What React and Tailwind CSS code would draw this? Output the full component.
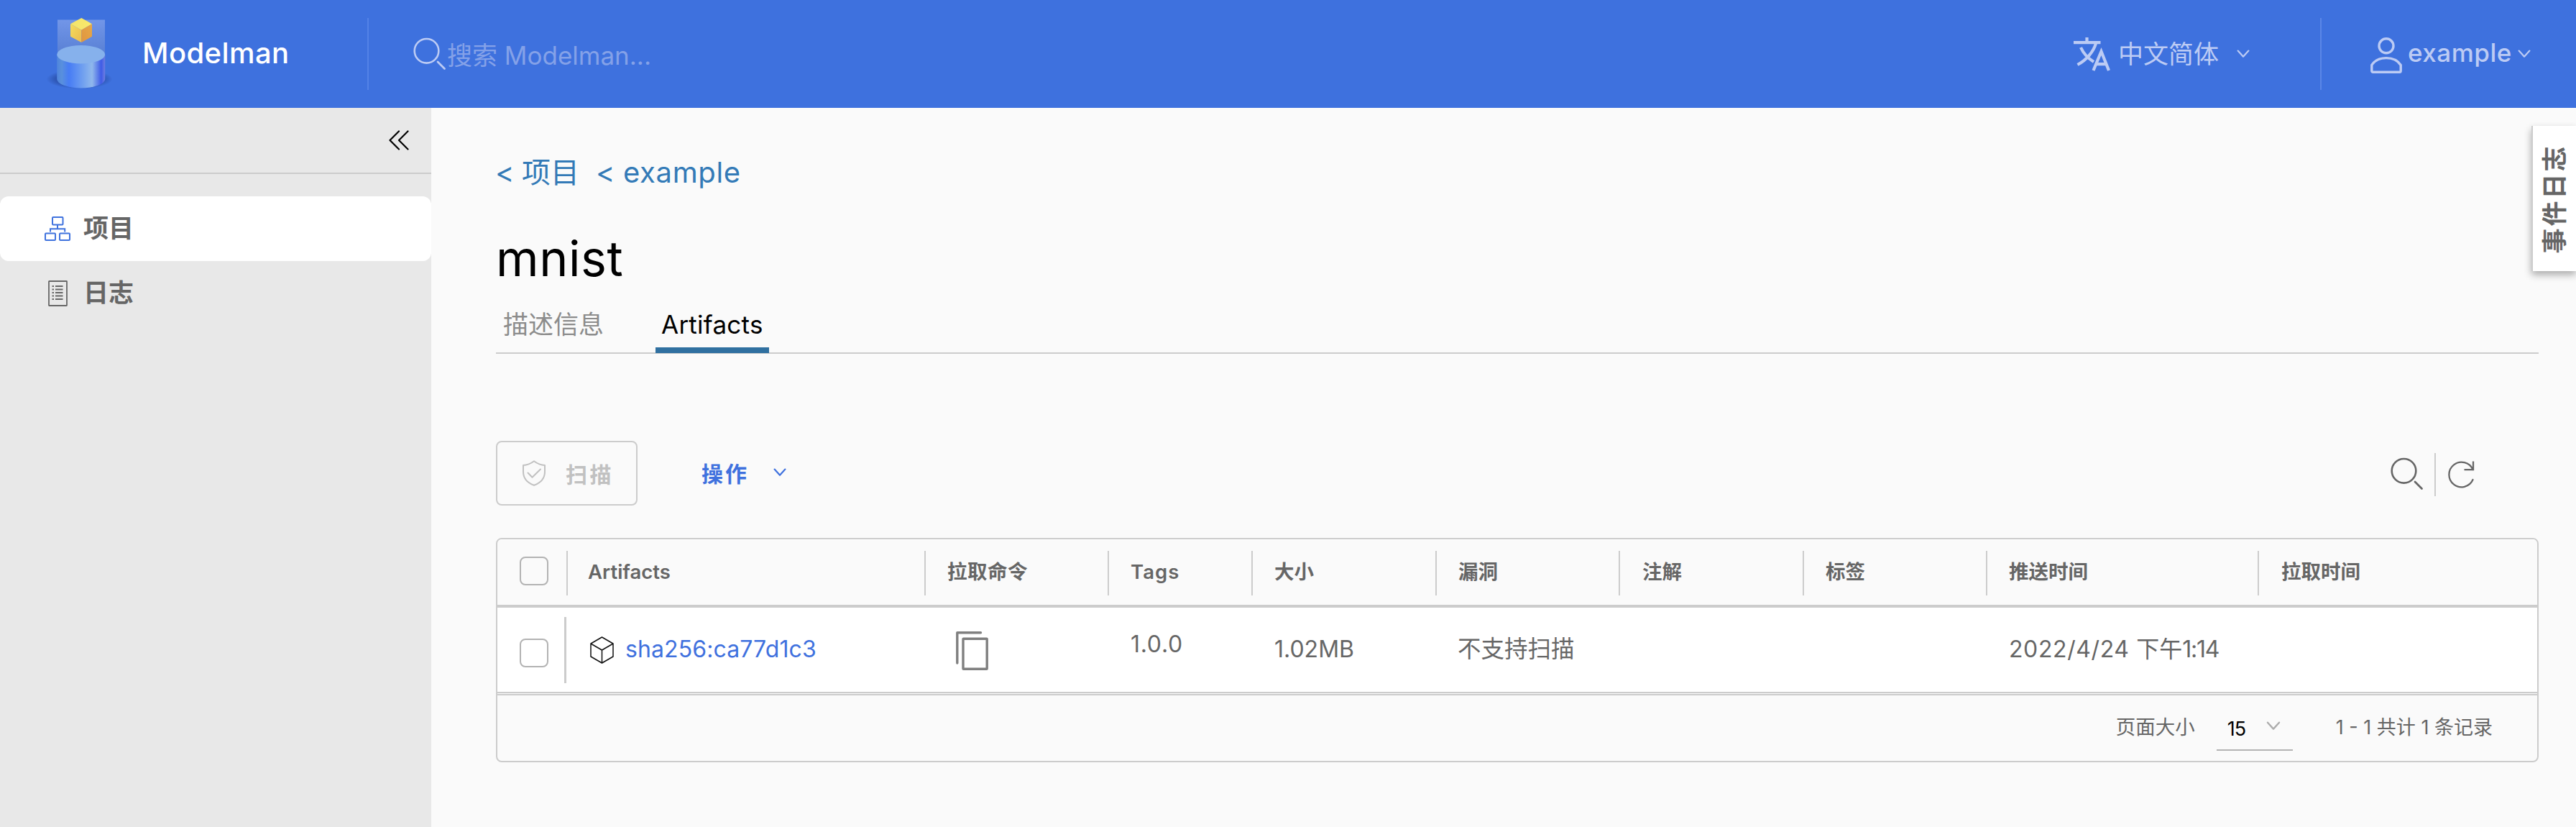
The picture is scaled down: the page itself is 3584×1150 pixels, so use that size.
const T = ({ className = "", children }) => (
  <span className={`block shrink-0 whitespace-pre leading-none ${className}`}>{children}</span>
);

const Chevron = ({ className = "" }) => (
  <svg viewBox="0 0 18 12" className={`block shrink-0 ${className}`} fill="none" stroke="currentColor" strokeWidth="2.2" strokeLinecap="round" strokeLinejoin="round">
    <path d="M1.6 1.6 9 9.8 16.4 1.6" />
  </svg>
);

const SearchIcon = ({ className = "" }) => (
  <svg viewBox="0 0 46 46" className={`block h-[46px] w-[46px] shrink-0 ${className}`} fill="none" stroke="currentColor" strokeWidth="2.6" strokeLinecap="round">
    <circle cx="18.5" cy="18.8" r="16.8" />
    <path d="M34 34 43.5 43.5" strokeWidth="2.8" />
  </svg>
);

function Logo() {
  return (
    <svg viewBox="60 10 100 120" className="ml-[60px] mt-[10px] h-[120px] w-[100px] shrink-0">
      <defs>
        <linearGradient id="beam" x1="0" y1="0" x2="0" y2="1">
          <stop offset="0" stopColor="#7296e8" />
          <stop offset="1" stopColor="#587fd4" />
        </linearGradient>
        <linearGradient id="body" x1="0" y1="0" x2="1" y2="0">
          <stop offset="0" stopColor="#4f84dc" />
          <stop offset="0.1" stopColor="#5990dd" />
          <stop offset="0.25" stopColor="#477cf5" />
          <stop offset="0.5" stopColor="#6a9bf0" />
          <stop offset="0.73" stopColor="#90b8ec" />
          <stop offset="0.92" stopColor="#3e5be6" />
          <stop offset="1" stopColor="#6f7ee0" />
        </linearGradient>
        <linearGradient id="cubeTop" x1="0" y1="0" x2="1" y2="0">
          <stop offset="0" stopColor="#f3e36c" />
          <stop offset="1" stopColor="#f9ea6a" />
        </linearGradient>
        <linearGradient id="cubeLeft" x1="0" y1="0" x2="1" y2="1">
          <stop offset="0" stopColor="#f4dc5c" />
          <stop offset="1" stopColor="#eabb50" />
        </linearGradient>
        <linearGradient id="cubeRight" x1="0" y1="1" x2="1" y2="0">
          <stop offset="0" stopColor="#e0943f" />
          <stop offset="1" stopColor="#e6a948" />
        </linearGradient>
        <radialGradient id="shade">
          <stop offset="0.6" stopColor="#1e3c8c" stopOpacity="0.7" />
          <stop offset="1" stopColor="#1e3c8c" stopOpacity="0" />
        </radialGradient>
      </defs>
      <ellipse cx="110.5" cy="110" rx="46" ry="13.5" fill="url(#shade)" />
      <path d="M80 27.5H146V76H80Z" fill="url(#beam)" />
      <path d="M79.2 76V110A33.5 12.5 0 0 0 146.200 110V76Z" fill="url(#body)" />
      <ellipse cx="112.7" cy="75.8" rx="33.5" ry="12.7" fill="#86b1ec" />
      <path d="M113.3 25 128 33.2 113.3 41.7 98 33.2Z" fill="url(#cubeTop)" />
      <path d="M98 33.2 113.3 41.7V59L98 50.8Z" fill="url(#cubeLeft)" />
      <path d="M128 33.2 113.3 41.7V59L128 50.8Z" fill="url(#cubeRight)" />
    </svg>
  );
}

function Header() {
  return (
    <header className="flex h-[150px] items-start bg-[#3e71de]">
      <Logo />
      <T className="ml-[38px] mt-[54px] w-[313px] text-[40px] font-medium tracking-[0.4px] text-white">Modelman</T>
      <div className="mt-[25px] h-[100px] w-[2px] bg-[#5482e7]" />
      <SearchIcon className="ml-[62px] mt-[52px] text-[#bccbf4]" />
      <T className="ml-px mt-[60px] text-[35px] text-[#84a1e8]">搜索 Modelman...</T>
      <div className="ml-auto flex w-[343px] items-start text-[#bccbf4]">
        <svg viewBox="0 0 51 47" className="mt-[52px] h-[47px] w-[51px] shrink-0" fill="none" stroke="currentColor" strokeWidth="4.2">
          <path d="M0 7.2H37.5M18.5 0V7.2M31 8.5C27.5 20 18 31.5 5.5 38M10 14C14 23 20 29 28 34" />
          <path d="M27.5 46 38.5 19.5 49 46M31 37.2H46" />
        </svg>
        <T className="ml-[11px] mt-[58px] w-[165px] text-[35px]">中文简体</T>
        <Chevron className="mt-[69px] h-[12px] w-[18px]" />
      </div>
      <div className="mt-[25px] h-[100px] w-[2px] bg-[#5b87e7]" />
      <div className="flex w-[354px] items-start text-[#bccbf4]">
        <svg viewBox="0 0 44 50" className="ml-[68px] mt-[52px] h-[50px] w-[44px] shrink-0" fill="none" stroke="currentColor" strokeWidth="3.4">
          <circle cx="22" cy="11.8" r="10" />
          <path d="M1.8 38.5C6 32 13.5 28.6 22 28.6S38 32 42.2 38.5V46.5Q42.2 48.3 40.4 48.3H3.6Q1.8 48.3 1.8 46.5Z" />
        </svg>
        <T className="ml-[8px] mt-[56px] w-[153px] text-[35px] font-medium tracking-[0.5px]">example</T>
        <Chevron className="mt-[69px] h-[12px] w-[18px]" />
      </div>
    </header>
  );
}

function Sidebar() {
  return (
    <aside className="w-[600px] shrink-0 bg-[#e8e8e8]">
      <div className="flex h-[92px] items-start border-b-2 border-[#cccccc]">
        <svg viewBox="0 0 28 28" className="ml-[541px] mt-[31px] h-[28px] w-[28px]" fill="none" stroke="#000" strokeWidth="2.2" strokeLinecap="round" strokeLinejoin="round">
          <path d="M14 1.5 1.5 14 14 26.5M26.5 1.5 14 14 26.5 26.5" />
        </svg>
      </div>
      <nav className="mt-[31px] text-[35px] font-bold text-[#666666]">
        <div className="flex h-[90px] items-start rounded-[12px] bg-white">
          <svg viewBox="0 0 36 34" className="ml-[62px] mt-[28px] h-[34px] w-[36px]" fill="none" stroke="#3f72de" strokeWidth="2">
            <rect x="11" y="1" width="14.5" height="10.5" rx="1" />
            <rect x="1" y="23.5" width="14" height="9.5" rx="1" />
            <rect x="21" y="23.5" width="14" height="9.5" rx="1" />
            <path d="M18 11.5V17M8 21.5V17.2H28.2V21.5" />
          </svg>
          <T className="ml-[18px] mt-[27px]">项目</T>
        </div>
        <div className="flex h-[90px] items-start">
          <svg viewBox="0 0 27 36" className="ml-[67px] mt-[27px] h-[36px] w-[27px]" fill="none" stroke="#666666" strokeWidth="1.8">
            <rect x="1" y="1" width="25" height="34" rx="0.5" />
            <path d="M5.5 8H8M10 8H20.5M5.5 12.5H8M10 12.5H20.5M5.5 17H8M10 17H20.5M5.5 21.5H8M10 21.5H20.5M5.5 26H8M10 26H20.5" strokeWidth="2.2" />
          </svg>
          <T className="ml-[22px] mt-[27px]">日志</T>
        </div>
      </nav>
    </aside>
  );
}

function Toolbar() {
  return (
    <div className="mt-[121px] flex h-[90px] items-start">
      <button className="flex h-[90px] w-[197px] items-start rounded-[8px] border-2 border-[#cccccc] text-[#c1c1c1]">
        <svg viewBox="0 0 32 36" className="ml-[35px] mt-[25px] h-[36px] w-[32px]" fill="none" stroke="currentColor" strokeWidth="2" strokeLinejoin="round" strokeLinecap="round">
          <path d="M16 1.2C20.5 4.6 25.5 6.7 31 7V16C31 25 25 31.5 16 34.8 7 31.5 1 25 1 16V7C6.5 6.7 11.5 4.6 16 1.2Z" />
          <path d="M7.5 17.5 13.5 23.8 25 12.5" />
        </svg>
        <T className="ml-[28px] mt-[30px] text-[30px] font-bold tracking-[3.5px]">扫描</T>
      </button>
      <div className="ml-[89px] flex items-start text-[#3f71de]">
        <T className="mt-[31px] w-[100px] text-[30px] font-bold tracking-[3px]">操作</T>
        <Chevron className="mt-[38px] h-[12px] w-[18px]" />
      </div>
      <div className="ml-auto mr-[140px] flex items-start text-[#666666]">
        <SearchIcon className="mt-[23px]" />
        <div className="ml-[15px] mt-[17px] h-[60px] w-[2px] bg-[#cccccc]" />
        <svg viewBox="0 0 38 38" className="ml-[17px] mt-[28px] h-[38px] w-[38px]" fill="none" stroke="currentColor" strokeWidth="2.3" strokeLinecap="round">
          <path d="M34.5 26A17.3 17.3 0 1 1 34.5 12" />
          <path d="M35 0.5V12.2H22.5" strokeLinecap="butt" />
        </svg>
      </div>
    </div>
  );
}

const COLS = "grid grid-cols-[96px_498px_255px_200px_256px_255px_256px_255px_378px_389px]";

const HEADS = [
  ["Artifacts", "ml-[28px] font-semibold"],
  ["拉取命令", "ml-[30px] font-bold tracking-[0.5px]"],
  ["Tags", "ml-[30px] font-semibold tracking-[1px]"],
  ["大小", "ml-[30px] font-bold"],
  ["漏洞", "ml-[30px] font-bold"],
  ["注解", "ml-[31px] font-bold"],
  ["标签", "ml-[30px] font-bold"],
  ["推送时间", "ml-[30px] font-bold"],
  ["拉取时间", "ml-[31px] font-bold"],
];

const Checkbox = ({ className = "" }) => (
  <div className={`h-[40px] w-[40px] rounded-[8px] border-2 border-[#b3b3b3] ${className}`} />
);

function DataGrid() {
  return (
    <div className="mt-[45px] h-[312px] w-[2842px] rounded-[8px] border-2 border-[#cccccc] text-[#666666]">
      <div className={`${COLS} h-[95px] rounded-t-[6px] border-b-4 border-t border-b-[#cccccc] border-t-white`}>
        <div className="flex items-start">
          <Checkbox className="ml-[31px] mt-[23px]" />
        </div>
        {HEADS.map(([label, style]) => (
          <div key={label} className="mt-[15px] flex h-[62px] items-start border-l-2 border-[#cccccc]">
            <T className={`mt-[16px] text-[27.5px] ${style}`}>{label}</T>
          </div>
        ))}
      </div>
      <div className={`${COLS} h-[119px] items-start border-b-2 border-[#cccccc] bg-white text-[32px]`}>
        <div className="flex items-start">
          <Checkbox className="ml-[31px] mt-[43px]" />
          <div className="ml-[22px] mt-[13px] h-[92px] w-[3px] bg-[#cccccc]" />
        </div>
        <div className="flex items-start">
          <svg viewBox="0 0 33 38" className="ml-[33px] mt-[40px] h-[38px] w-[33px]" fill="none" stroke="#111" strokeWidth="1.5" strokeLinejoin="round">
            <path d="M16.5 1 32 10V28L16.5 37 1 28V10ZM1 10 16.5 19 32 10M16.5 19V37" />
          </svg>
          <T className="ml-[16px] mt-[42px] tracking-[0.1px] text-[#3f71de]">sha256:ca77d1c3</T>
        </div>
        <div className="flex items-start">
          <svg viewBox="0 0 45 54" className="ml-[44px] mt-[33px] h-[54px] w-[45px]" fill="none" stroke="#808080" strokeWidth="3.4" strokeLinecap="round" strokeLinejoin="round">
            <path d="M1.8 44V1.8H34.5" />
            <rect x="10" y="10.2" width="33.2" height="42" rx="0.5" />
          </svg>
        </div>
        <T className="ml-[32px] mt-[35px] tracking-[0.7px]">1.0.0</T>
        <T className="ml-[32px] mt-[42px]">1.02MB</T>
        <T className="ml-[31px] mt-[42px] text-[32.5px]">不支持扫描</T>
        <span />
        <span />
        <T className="ml-[32px] mt-[42px]">
          <span className="tracking-[0.6px]">2022/4/24 </span>下午<span className="tracking-[-1.2px]">1:14</span>
        </T>
        <span />
      </div>
      <div className="mt-px flex h-[93px] items-start border-t-2 border-[#cccccc] text-[27.5px]">
        <T className="ml-auto mt-[31px]">页面大小</T>
        <div className="ml-[30px] mt-[12px] flex h-[65px] w-[106px] shrink-0 items-start border-b-2 border-[#b3b3b3]">
          <T className="ml-[15px] mt-[21px] w-[54px] text-[27px] tracking-[-0.8px] text-black">15</T>
          <Chevron className="mt-[24px] h-[13px] w-[20px] text-[#adadad]" />
        </div>
        <T className="ml-[60px] mr-[62px] mt-[31px] text-[27px]">1 - 1 共计 1 条记录</T>
      </div>
    </div>
  );
}

function EventTab() {
  return (
    <div className="absolute right-0 top-[175px] flex h-[202px] w-[62px] items-center justify-center border-l-2 border-[#cccccc] bg-white shadow-[0_5px_10px_rgba(0,0,0,0.32)]">
      <T className="-rotate-90 text-[35px] font-bold tracking-[3px] text-[#666666]">事件日志</T>
    </div>
  );
}

export default function App() {
  return (
    <div className="relative flex h-[1150px] w-[3584px] flex-col overflow-hidden bg-[#fafafa] font-['Inter','Noto_Sans_CJK_SC',sans-serif]">
      <Header />
      <div className="flex flex-1">
        <Sidebar />
        <main className="w-[2984px] pl-[90px]">
          <div className="mt-[70px] flex h-[40px] text-[40px] text-[#337ab7]">
            <T className="-ml-px w-[37px]">{"<"}</T>
            <T className="w-[103px]">项目</T>
            <T className="w-[38px]">{"<"}</T>
            <T className="tracking-[0.65px]">example</T>
          </div>
          <h1 className="mt-[65px] text-[68px] leading-none tracking-[0.6px] text-black">mnist</h1>
          <div className="mt-[19px] flex h-[80px] w-[2842px] items-start text-[35px] shadow-[inset_0_-2px_0_#cccccc]">
            <T className="ml-[10px] mt-[22px] w-[212px] text-[#8c8c8c]">描述信息</T>
            <div className="h-[79px] w-[158px] border-b-8 border-[#3070a0] pl-[8px] pt-[22px] text-black">
              <T className="tracking-[0.25px]">Artifacts</T>
            </div>
          </div>
          <Toolbar />
          <DataGrid />
        </main>
      </div>
      <EventTab />
    </div>
  );
}
